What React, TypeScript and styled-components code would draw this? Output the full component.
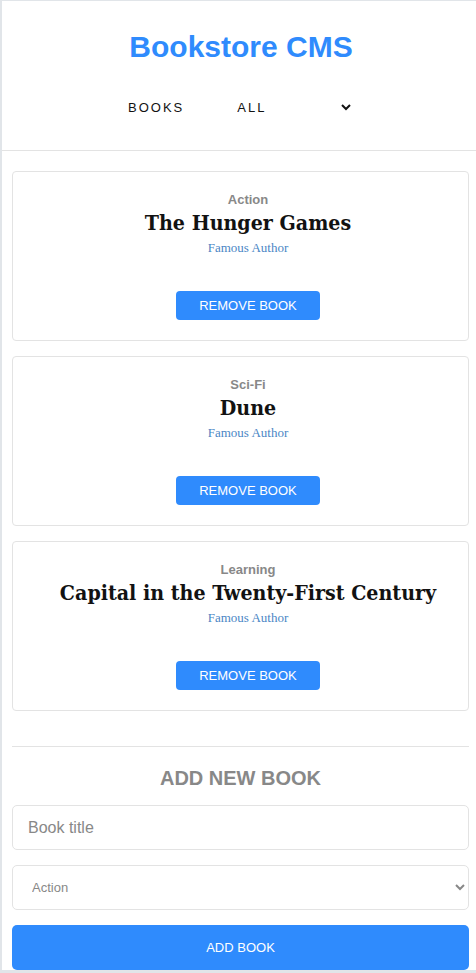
import * as React from 'react';
import styled, { createGlobalStyle } from 'styled-components';

const GlobalStyle = createGlobalStyle`
  body {
    margin: 0;
    background: #e1e5e9;
    font-family: "Liberation Sans", Arial, sans-serif;
  }
`

const Page = styled.div`
  margin: 1px 0 0 2px;
  background: #fff;
  min-height: 969px;
`

const Header = styled.header`
  padding: 28px 0 0;
  border-bottom: 1px solid #e3e3e3;
  height: 121px;
  text-align: center;
`

const Title = styled.h1`
  margin: 0;
  padding-left: 4px;
  font-size: 30px;
  font-weight: 700;
  color: #2f8bfd;
  line-height: 36px;
`

const Nav = styled.nav`
  display: flex;
  align-items: center;
  gap: 49px;
  margin-top: 34px;
  padding-left: 126px;
`

const NavLink = styled.a`
  font-size: 13px;
  letter-spacing: 2px;
  color: #121212;
  text-decoration: none;
`

const Filter = styled.select`
  width: 121px;
  border: none;
  background: #fff;
  font-family: "Liberation Sans", Arial, sans-serif;
  font-size: 13px;
  letter-spacing: 2px;
  color: #121212;
  outline: none;
`

const Main = styled.main`
  padding: 20px 7px 0 10px;
`

const List = styled.ul`
  list-style: none;
  margin: 0;
  padding: 0;
  display: flex;
  flex-direction: column;
  gap: 15px;
`

const Card = styled.li`
  height: 170px;
  border: 1px solid #e3e3e3;
  border-radius: 4px;
  padding: 20px 0 0 15px;
  box-sizing: border-box;
  text-align: center;
`

const Category = styled.span`
  display: block;
  font-size: 13px;
  font-weight: 700;
  color: #888;
  line-height: 16px;
`

const BookTitle = styled.h2`
  margin: 0;
  font-family: "DejaVu Serif", "Liberation Serif", serif;
  font-stretch: semi-condensed;
  font-size: 21.2px;
  font-weight: 700;
  color: #121212;
  line-height: 30px;
`

const Author = styled.span`
  display: block;
  font-family: "Liberation Serif", serif;
  font-size: 13px;
  color: #4a86c5;
  line-height: 20px;
`

const Button = styled.button<{ $wide?: boolean }>`
  display: block;
  margin: ${(p) => (p.$wide ? '0' : '33px auto 0')};
  width: ${(p) => (p.$wide ? '100%' : '144px')};
  height: ${(p) => (p.$wide ? '45px' : '29px')};
  border: none;
  border-radius: ${(p) => (p.$wide ? '5px' : '4px')};
  background: #2f8bfd;
  color: #fff;
  font-family: "Liberation Sans", Arial, sans-serif;
  font-size: 13px;
  cursor: pointer;
`

const Divider = styled.hr`
  margin: 35px 0 0;
  border: none;
  border-top: 1px solid #e3e3e3;
`

const Form = styled.form`
  display: flex;
  flex-direction: column;
  gap: 15px;
`

const FormTitle = styled.h2`
  margin: 19px 0 15px;
  text-align: center;
  font-size: 20px;
  font-weight: 700;
  color: #888;
  line-height: 24px;
`

const Field = styled.input`
  height: 45px;
  box-sizing: border-box;
  border: 1px solid #e3e3e3;
  border-radius: 5px;
  padding: 0 15px;
  font-family: "Liberation Sans", Arial, sans-serif;
  font-size: 16px;
  outline: none;
  &::placeholder {
    color: #888;
  }
`

const Choice = styled.select`
  height: 45px;
  box-sizing: border-box;
  border: 1px solid #e3e3e3;
  border-radius: 5px;
  padding: 0 15px;
  background: #fff;
  font-family: "Liberation Sans", Arial, sans-serif;
  font-size: 13px;
  color: #888;
  outline: none;
`

const books = [
  { id: 1, category: 'Action', title: 'The Hunger Games' },
  { id: 2, category: 'Sci-Fi', title: 'Dune' },
  { id: 3, category: 'Learning', title: 'Capital in the Twenty-First Century' },
];

const App = () => (
  <>
    <GlobalStyle />
    <Page>
      <Header>
        <Title>Bookstore CMS</Title>
        <Nav>
          <NavLink href="#">BOOKS</NavLink>
          <Filter defaultValue="all">
            <option value="all">ALL</option>
            <option value="action">ACTION</option>
            <option value="scifi">SCI-FI</option>
          </Filter>
        </Nav>
      </Header>
      <Main>
        <List>
          {books.map((b) => (
            <Card key={b.id}>
              <Category>{b.category}</Category>
              <BookTitle>{b.title}</BookTitle>
              <Author>Famous Author</Author>
              <Button type="button">REMOVE BOOK</Button>
            </Card>
          ))}
        </List>
        <Divider />
        <FormTitle>ADD NEW BOOK</FormTitle>
        <Form onSubmit={(e) => e.preventDefault()}>
          <Field placeholder="Book title" />
          <Choice defaultValue="Action">
            <option>Action</option>
            <option>Sci-Fi</option>
            <option>Learning</option>
          </Choice>
          <Button $wide type="submit">ADD BOOK</Button>
        </Form>
      </Main>
    </Page>
  </>
)

export default App
